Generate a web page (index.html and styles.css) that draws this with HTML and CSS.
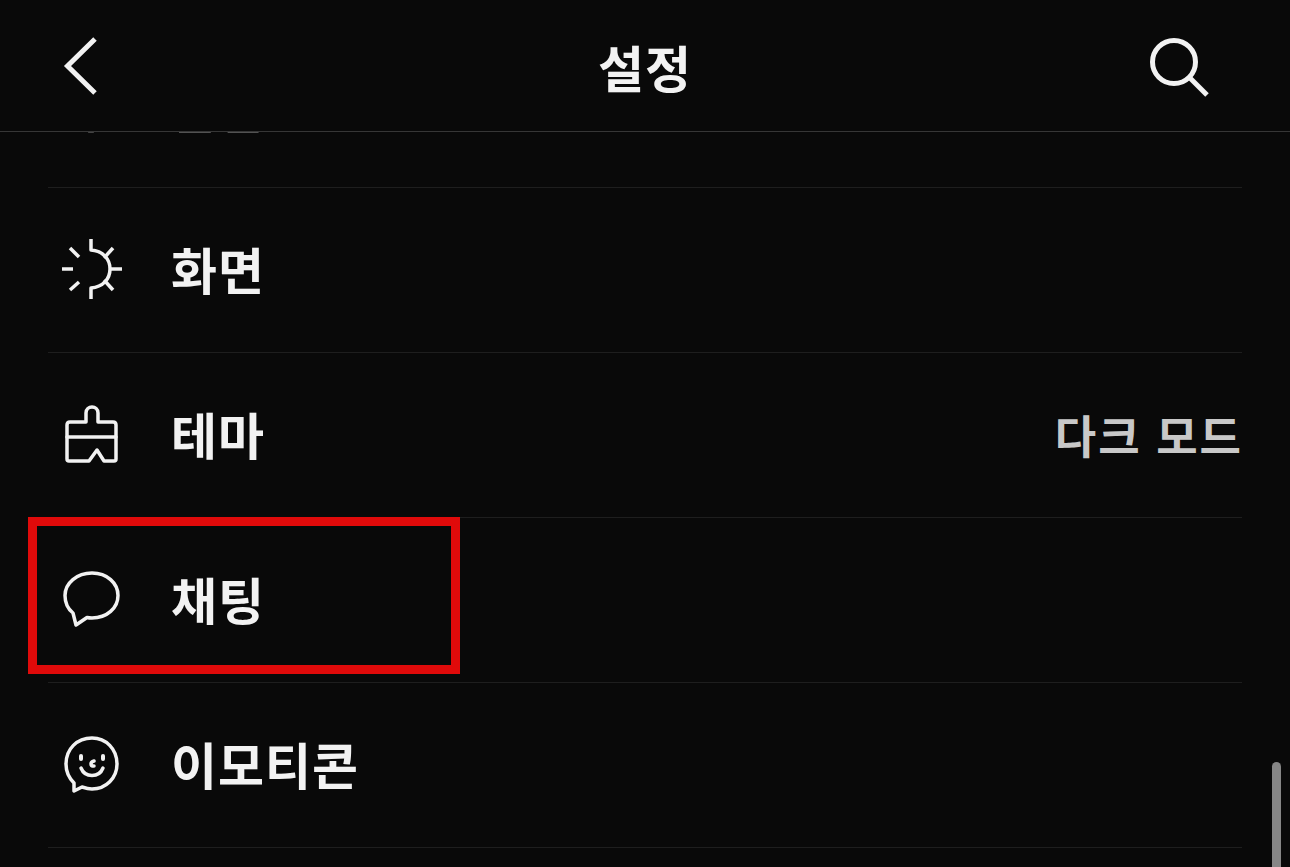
FILE: index.html
```html
<!DOCTYPE html>
<html lang="ko">
<head>
    <meta charset="UTF-8">
    <meta name="viewport" content="width=device-width, initial-scale=1.0">
    <title>설정</title>
    <link rel="stylesheet" href="styles.css">
</head>
<body>

<div class="screen">
    <header class="top-bar">
        <svg class="icon back-icon" viewBox="0 0 64 64">
            <path d="M35 5 L7.5 32 L35 59"/>
        </svg>
        <h1>설정</h1>
        <svg class="icon search-icon" viewBox="0 0 64 64">
            <circle cx="28" cy="28" r="21.5"/>
            <path d="M44 44 L61 61"/>
        </svg>
    </header>

    <main class="content">
        <ul class="menu">
            <li class="row row-clipped">
                <svg class="icon thin" viewBox="0 0 64 64">
                    <path d="M29 54.5 H33"/>
                </svg>
                <span class="label">알림</span>
            </li>
            <li class="row">
                <svg class="icon thin butt" viewBox="0 0 64 64">
                    <path d="M2 31 H13"/>
                    <path d="M10 10 L19 19"/>
                    <path d="M10 52 L19 44"/>
                    <path d="M31 1 V12 C43 13 50 21 50 31 C50 41 43 49 31 50 V61"/>
                    <path d="M44 20 L53 10"/>
                    <path d="M44 42 L53 52"/>
                    <path d="M50 31 H62"/>
                </svg>
                <span class="label">화면</span>
            </li>
            <li class="row">
                <svg class="icon thin" viewBox="0 0 64 64">
                    <path d="M26 19 V10 C26 2 38 2 38 10 V19 H53 C55 19 56 20 56 22 V56 C56 58 55 58 54 58 H44 L37 47 L29 58 H9 C8 58 7 58 7 56 V22 C7 20 8 19 10 19 Z"/>
                    <path d="M7 34 H56"/>
                </svg>
                <span class="label">테마</span>
                <span class="value">다크 모드</span>
            </li>
            <li class="row">
                <svg class="icon thin" viewBox="0 0 64 64">
                    <path d="M13 45 C8 41 5 34 5 27.5 C5 15 17 5 32 5 C47 5 58 15 58 27.5 C58 40 47 50 32 50 C30 50 29 50 27 49.5 L16 57 Z"/>
                </svg>
                <span class="label">채팅</span>
            </li>
            <li class="row">
                <svg class="icon thin" viewBox="0 0 64 64">
                    <path d="M14 50 C9 45 6 38 6 31 C6 16 17 5 32 5 C46 5 57 16 57 31 C57 45 46 56 32 56 C28 56 25 55 22 54 L14 58 Z"/>
                    <path class="dot" d="M21 23 V26"/>
                    <path class="dot" d="M43 23 V26"/>
                    <path d="M34 28 C30 29 30 33 34 33"/>
                    <path d="M21 35 C25 45 39 45 43 35"/>
                </svg>
                <span class="label">이모티콘</span>
            </li>
        </ul>
    </main>

    <div class="highlight"></div>
    <div class="scroll-thumb"></div>
</div>

</body>
</html>
```

FILE: styles.css
```css
* {
    box-sizing: border-box;
}
html, body {
    margin: 0;
    height: 100%;
}
body {
    font-family: "Noto Sans CJK KR", "Noto Sans", sans-serif;
    background-color: #090909;
    color: #f2f2f2;
}
.screen {
    position: relative;
    height: 867px;
    overflow: hidden;
}
.top-bar {
    height: 132px;
    padding: 0 80px;
    display: grid;
    grid-template-columns: 1fr auto 1fr;
    align-items: center;
    border-bottom: 1px solid #363636;
    position: relative;
    z-index: 1;
    background-color: #090909;
}
.top-bar h1 {
    margin: 0;
    font-size: 50px;
    font-weight: 700;
    line-height: 64px;
    letter-spacing: 1px;
}
.back-icon {
    margin-left: -20px;
}
.search-icon {
    justify-self: end;
}
.content {
    height: 735px;
    overflow: hidden;
}
.menu {
    list-style: none;
    margin: -109px 48px 0;
    padding: 0;
}
.row {
    height: 165px;
    padding-left: 12px;
    display: flex;
    align-items: center;
    gap: 47px;
    border-bottom: 1px solid #1e1e1e;
}
.row-clipped {
    padding-top: 6px;
}
.label {
    margin-top: -4px;
    font-size: 50px;
    font-weight: 700;
    line-height: 64px;
    letter-spacing: 1px;
}
.value {
    margin-left: auto;
    margin-right: -1px;
    font-size: 45px;
    font-weight: 700;
    line-height: 64px;
    letter-spacing: 2px;
    color: #c8c8c8;
}
.icon {
    width: 64px;
    height: 64px;
    flex: none;
    fill: none;
    stroke: #f2f2f2;
    stroke-width: 5;
}
.icon.thin {
    stroke-width: 3.5;
    stroke-linecap: round;
    stroke-linejoin: round;
}
.icon.butt {
    stroke-linecap: butt;
}
.icon .dot {
    stroke-width: 4;
}
.highlight {
    position: absolute;
    left: 28px;
    top: 517px;
    width: 432px;
    height: 157px;
    border: 9px solid #e00a0a;
}
.scroll-thumb {
    position: absolute;
    left: 1272px;
    top: 762px;
    width: 9px;
    height: 110px;
    border-radius: 5px;
    background-color: #868686;
}
```
